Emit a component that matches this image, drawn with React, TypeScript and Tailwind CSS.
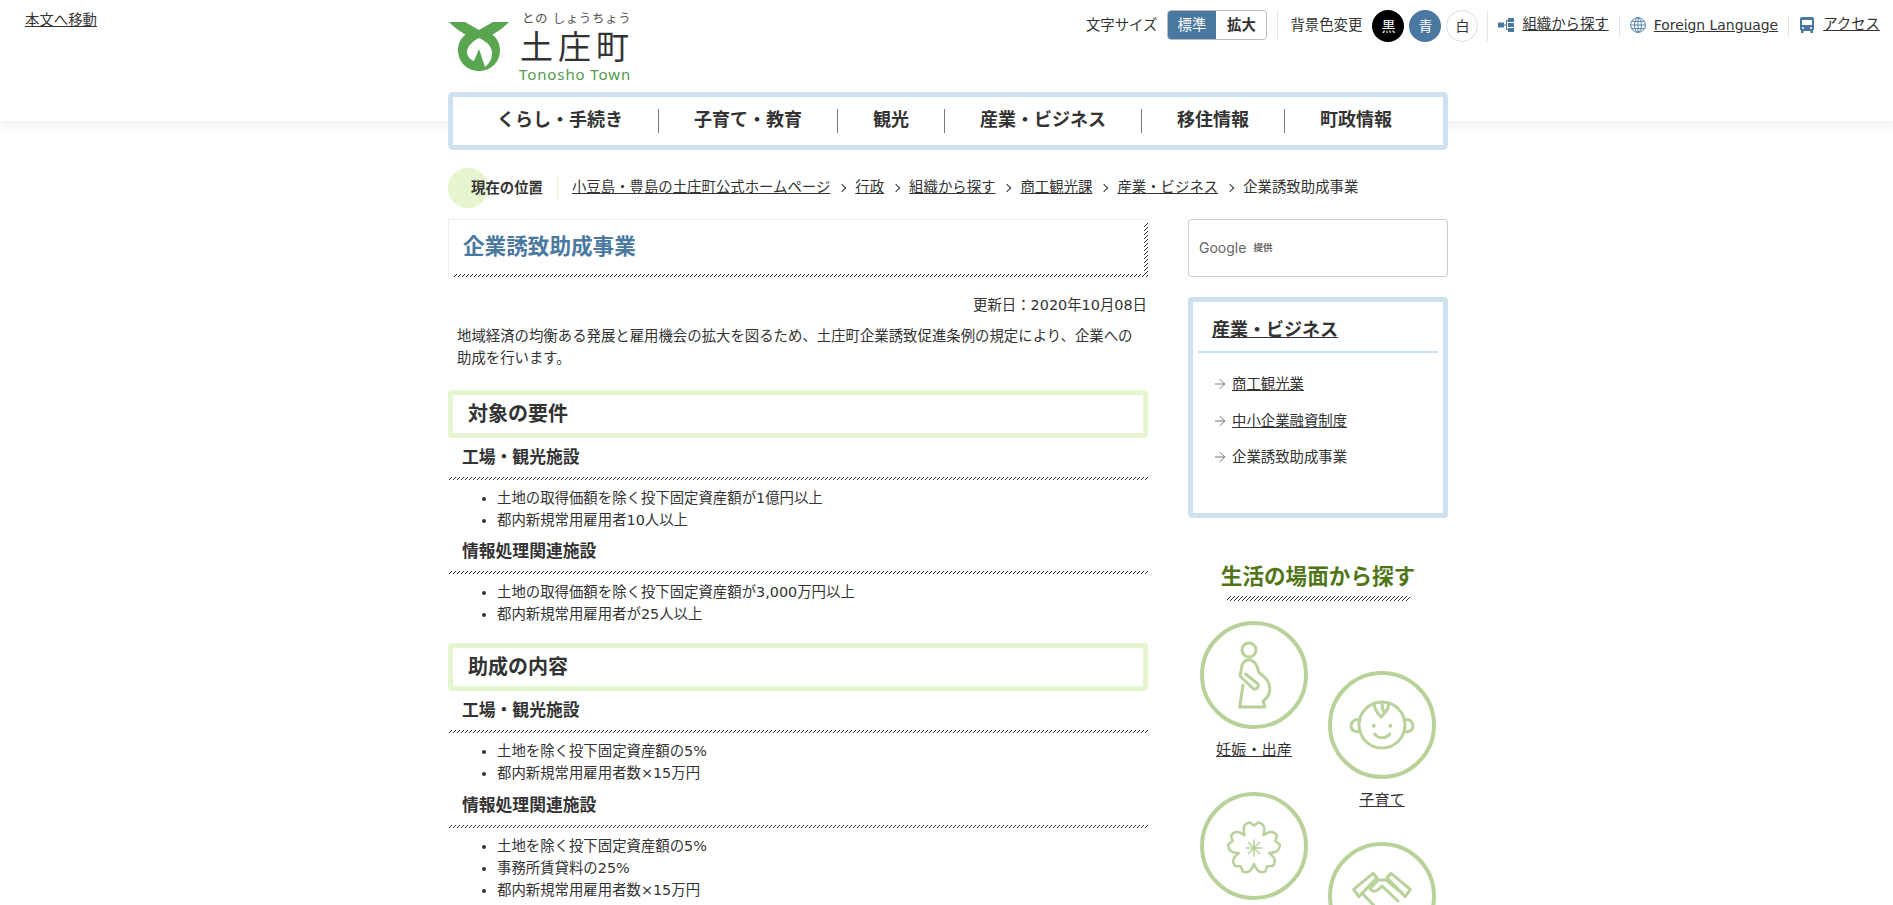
import { ArrowRight } from 'lucide-react';
import type { ReactNode } from 'react';

const font = 'font-["DejaVu_Sans","Noto_Sans_CJK_JP",sans-serif]';
const hatch = 'bg-[linear-gradient(135deg,transparent_38%,#333_38%,#333_62%,transparent_62%)] bg-[length:4px_4px]';

const navItems = ['くらし・手続き', '子育て・教育', '観光', '産業・ビジネス', '移住情報', '町政情報'];
const crumbs = ['小豆島・豊島の土庄町公式ホームページ', '行政', '組織から探す', '商工観光課', '産業・ビジネス'];

// five notched petals round the centre of the circle
function sakuraPath(cx: number, cy: number) {
  const pt = (deg: number, r: number) => {
    const a = (deg * Math.PI) / 180;
    return `${(cx + r * Math.cos(a)).toFixed(1)} ${(cy + r * Math.sin(a)).toFixed(1)}`;
  };
  let d = `M${pt(-126, 16)}`;
  for (let k = 0; k < 5; k++) {
    const a = -90 + 72 * k;
    d += ` Q${pt(a - 28, 27)} ${pt(a - 10, 26)} L${pt(a, 22.5)} L${pt(a + 10, 26)} Q${pt(a + 28, 27)} ${pt(a + 36, 16)}`;
  }
  return d + 'Z';
}

function Logo() {
  return (
    <svg width="60" height="50" viewBox="0 0 60 50" className="shrink-0">
      <path d="M0 0 H16 L30 8 L44 0 H60 C52 8 46 11 41 14 L30 10 L19 14 C14 11 8 8 0 0Z" fill="#5aa650" />
      <path fillRule="evenodd" d="M30 8 C42 8 51 17 51 28 C51 40 42 49 30 49 C18 49 9 40 9 28 C9 17 18 8 30 8Z M30 16 C24 19 18 24 18 30 C18 35 22 38 25 39 L30 27 L36 45 C41 41 43 36 43 31 C43 24 37 19 30 16Z" fill="#5aa650" />
    </svg>
  );
}

function OrgIcon() {
  return (
    <svg width="16" height="14" viewBox="0 0 16 14" fill="#4a78a0" className="shrink-0">
      <rect x="0" y="4.5" width="6" height="5" />
      <rect x="10" y="0" width="6" height="4" />
      <rect x="10" y="5" width="6" height="4" />
      <rect x="10" y="10" width="6" height="4" />
      <path d="M6 6.5 H8 V2 H10 V3 H9 V11 H10 V12 H8 V7.5 H6Z" />
    </svg>
  );
}

function GlobeIcon() {
  return (
    <svg width="16" height="16" viewBox="0 0 16 16" fill="none" stroke="#4a78a0" strokeWidth="0.9" className="shrink-0">
      <circle cx="8" cy="8" r="7.4" />
      <ellipse cx="8" cy="8" rx="3.4" ry="7.4" />
      <path d="M8 .6 V15.4 M.6 8 H15.4 M1.6 4.4 H14.4 M1.6 11.6 H14.4" />
    </svg>
  );
}

function BusIcon() {
  return (
    <svg width="16" height="16" viewBox="0 0 16 16" className="shrink-0">
      <path fillRule="evenodd" fill="#4a78a0" d="M3 0 H13 C14.5 0 15 1 15 2 V13 H14 V16 H11.5 V14 H4.5 V16 H2 V13 H1 V2 C1 1 1.5 0 3 0Z M3 3 V8 H13 V3Z M4 10 A1 1 0 1 0 4 12 A1 1 0 1 0 4 10Z M12 10 A1 1 0 1 0 12 12 A1 1 0 1 0 12 10Z" />
    </svg>
  );
}

function Sep({ h = 'h-[30px]' }: { h?: string }) {
  return <span className={`w-px ${h} bg-[#e5e5e5] shrink-0`} />;
}

function Header() {
  return (
    <header className="h-[121px] bg-white shadow-[0_2px_12px_rgba(0,0,0,0.1)] flex">
      <div className="w-[449px] shrink-0 pt-[10px] pl-[25px] text-[14.4px]">
        <a className="underline">本文へ移動</a>
      </div>
      <div className="flex-1 pt-[11px] flex gap-[10px]">
        <div className="pt-[11px]"><Logo /></div>
        <div className="flex flex-col items-start">
          <span className="text-[12.5px] leading-[15px] tracking-[0.6px] text-[#555] pl-[3px] whitespace-pre">との しょうちょう</span>
          <span className="text-[33px] leading-[39px] tracking-[5px] text-[#333] pl-[1px] font-['Noto_Sans_CJK_JP',sans-serif]">土庄町</span>
          <span className="text-[15px] leading-[18px] tracking-[0.9px] text-[#4f9a4f] font-['Noto_Sans',sans-serif]">Tonosho Town</span>
        </div>
      </div>
      <div className="pt-[10px] pr-[13px] flex items-start text-[14.4px] text-[#333]">
        <span className="leading-[30px] mr-[10px]">文字サイズ</span>
        <div className="flex h-[30px] w-[100px] rounded-[4px] overflow-hidden border border-[#bbb] leading-[28px] text-center mr-[10px]">
          <span className="w-[49px] -my-px -ml-px h-[30px] leading-[30px] bg-[#4a78a0] text-white">標準</span>
          <span className="flex-1 font-bold">拡大</span>
        </div>
        <Sep />
        <span className="leading-[30px] ml-[12px] mr-[10px]">背景色変更</span>
        <div className="flex gap-[5px] mr-[9px] text-[14px] leading-[32px] text-center">
          <span className="w-[32px] h-[32px] rounded-full bg-black text-white">黒</span>
          <span className="w-[32px] h-[32px] rounded-full bg-[#4a78a0] text-white">青</span>
          <span className="w-[32px] h-[32px] rounded-full bg-white border border-[#ddd] leading-[30px]">白</span>
        </div>
        <Sep h="h-[32px]" />
        <a className="flex items-center gap-[8px] h-[30px] mx-[10px]"><OrgIcon /><span className="underline">組織から探す</span></a>
        <Sep h="h-[22px] mt-[5px]" />
        <a className="flex items-center gap-[8px] h-[30px] mx-[10px]"><GlobeIcon /><span className="underline text-[13.9px]">Foreign Language</span></a>
        <Sep h="h-[22px] mt-[5px]" />
        <a className="flex items-center gap-[8px] h-[30px] ml-[10px]"><BusIcon /><span className="underline">アクセス</span></a>
      </div>
    </header>
  );
}

function GlobalNav() {
  return (
    <nav className="relative h-[58px] border-[5px] border-[#cde1ef] rounded-[5px] bg-white pl-[9px] flex items-center">
      {navItems.map((item, i) => (
        <div key={item} className={`px-[35px] h-[24px] leading-[22px] text-[18px] font-bold text-[#333] ${i > 0 ? 'border-l border-[#777]' : ''}`}>
          {item}
        </div>
      ))}
    </nav>
  );
}

function Breadcrumb() {
  return (
    <div className="mt-[18px] h-[40px] flex items-center text-[14.4px] text-[#333] bg-[radial-gradient(circle_at_20px_20px,#e5f5d0_20px,transparent_20.5px)]">
      <span className="pl-[23px] pr-[14px] font-bold border-r border-[#e5f5d0] leading-[24px]">現在の位置</span>
      <div className="flex items-center pl-[14px]">
        {crumbs.map((c) => (
          <span key={c} className="flex items-center">
            <a className="underline">{c}</a>
            <span className="w-[6px] h-[6px] border-t-[1.5px] border-r-[1.5px] border-[#333] rotate-45 ml-[9px] mr-[10px]" />
          </span>
        ))}
        <span>企業誘致助成事業</span>
      </div>
    </div>
  );
}

function H2({ children, className = '' }: { children: string; className?: string }) {
  return (
    <h2 className={`h-[48px] border-[5px] border-[#e5f5d0] rounded-[4px] pl-[15px] leading-[38px] text-[20px] font-bold text-[#333] ${className}`}>
      {children}
    </h2>
  );
}

function H3({ children, className = '' }: { children: string; className?: string }) {
  return (
    <div className={className}>
      <h3 className="pl-[14px] text-[16.8px] leading-[24px] font-bold text-[#333]">{children}</h3>
      <div className={`h-[3px] mt-[8px] ${hatch}`} />
    </div>
  );
}

function Bullets({ items }: { items: string[] }) {
  return (
    <ul className="list-disc pl-[49px] mt-[7px] text-[14.4px] leading-[22px] text-[#333]">
      {items.map((t) => <li key={t}>{t}</li>)}
    </ul>
  );
}

function Main() {
  return (
    <main className="w-[700px] shrink-0">
      <div className="relative h-[58px] border-t border-l border-[#eee] pl-[14px] text-[21.6px] leading-[54px] font-bold text-[#4a78a0]">
        企業誘致助成事業
        <span className={`absolute left-[4px] right-0 bottom-0 h-[3px] ${hatch}`} />
        <span className={`absolute right-0 top-[3px] bottom-0 w-[4px] ${hatch}`} />
      </div>
      <p className="mt-[17px] text-right pr-[1px] text-[14.4px] leading-[22px] text-[#333]">更新日：2020年10月08日</p>
      <p className="mt-[10px] px-[9px] text-[14.4px] leading-[21.6px] text-[#333]">
        地域経済の均衡ある発展と雇用機会の拡大を図るため、土庄町企業誘致促進条例の規定により、企業への助成を行います。
      </p>
      <H2 className="mt-[21px]">対象の要件</H2>
      <H3 className="mt-[7px]">工場・観光施設</H3>
      <Bullets items={['土地の取得価額を除く投下固定資産額が1億円以上', '都内新規常用雇用者10人以上']} />
      <H3 className="mt-[8px]">情報処理関連施設</H3>
      <Bullets items={['土地の取得価額を除く投下固定資産額が3,000万円以上', '都内新規常用雇用者が25人以上']} />
      <H2 className="mt-[18px]">助成の内容</H2>
      <H3 className="mt-[7px]">工場・観光施設</H3>
      <Bullets items={['土地を除く投下固定資産額の5%', '都内新規常用雇用者数×15万円']} />
      <H3 className="mt-[9px]">情報処理関連施設</H3>
      <Bullets items={['土地を除く投下固定資産額の5%', '事務所賃貸料の25%', '都内新規常用雇用者数×15万円']} />
    </main>
  );
}

function CircleIcon({ children }: { children: ReactNode }) {
  return (
    <div className="w-[108px] h-[108px] rounded-full border-[4px] border-[#b9d29a] flex items-center justify-center">
      <svg width="100" height="100" viewBox="0 0 100 100" fill="none" stroke="#b9d29a" strokeWidth="3" strokeLinejoin="round" strokeLinecap="round">
        {children}
      </svg>
    </div>
  );
}

function Scene({ label, children }: { label: string; children: ReactNode }) {
  return (
    <div className="h-[171px] flex flex-col items-center">
      <CircleIcon>{children}</CircleIcon>
      <a className="mt-[10px] text-[15.2px] leading-[22px] underline text-[#333]">{label}</a>
    </div>
  );
}

function Side() {
  return (
    <aside className="w-[260px] shrink-0 text-[#333]">
      <div className="h-[58px] border border-[#ccc] rounded-[3px] flex items-center pl-[10px] gap-[7px] text-[#666]">
        <span className="text-[14px] leading-none font-['Inter',sans-serif]">Google</span>
        <span className="text-[9.5px] leading-none font-bold">提供</span>
      </div>
      <div className="mt-[20px] h-[221px] border-[5px] border-[#cde1ef] rounded-[4px] px-[5px]">
        <div className="h-[51px] border-b-2 border-[#cde1ef] pl-[14px] pt-[16px] text-[18px] leading-[24px] font-bold">
          <a className="underline">産業・ビジネス</a>
        </div>
        <ul className="mt-[13px] text-[14.4px] leading-[22px]">
          <li className="flex items-center h-[36.5px] pl-[14px] gap-[4px]"><ArrowRight size={16} strokeWidth={1.2} color="#555" /><a className="underline">商工観光業</a></li>
          <li className="flex items-center h-[36.5px] pl-[14px] gap-[4px]"><ArrowRight size={16} strokeWidth={1.2} color="#555" /><a className="underline">中小企業融資制度</a></li>
          <li className="flex items-center h-[36.5px] pl-[14px] gap-[4px]"><ArrowRight size={16} strokeWidth={1.2} color="#555" /><span>企業誘致助成事業</span></li>
        </ul>
      </div>
      <h2 className="mt-[43px] text-center text-[21.6px] leading-[32px] font-bold text-[#4f7517]">生活の場面から探す</h2>
      <div className={`mx-auto mt-[3px] w-[183px] h-[5px] ${hatch}`} />
      <div className="mt-[20px] flex gap-[20px] pl-[12px]">
        <div className="flex flex-col">
          <Scene label="妊娠・出産">
            <circle cx="45" cy="25" r="7" />
            <path d="M39 60 L35.7 82 H61 L59 76 C66 72 68 62 63 55 C60 51 57 49 54.5 47 C54 41 50 34.7 45 34.7 C41 34.7 38 38 37.7 42.3 L36 51 L49 63.5 C52 65.5 56 61.5 53.5 58.5 L41.5 49" />
          </Scene>
          <Scene label="">
            <path d={sakuraPath(50, 52)} strokeWidth="2.5" />
            <path d="M50 44 V60 M42 52 H58 M44.5 46.5 L55.5 57.5 M55.5 46.5 L44.5 57.5" strokeWidth="1.6" />
          </Scene>
        </div>
        <div className="flex flex-col mt-[50px]">
          <Scene label="子育て">
            <circle cx="50" cy="50" r="23" />
            <path d="M28 45 C22 43 19 48 19 51 C19 55 23 58 28 56 M72 45 C78 43 81 48 81 51 C81 55 77 58 72 56" />
            <path d="M42 29 C43 36 47 40 49 42 C53 38 57 34 56.5 29 M50 27 C50 32 50 35 53 38" />
            <circle cx="41.7" cy="50.7" r="2" fill="#b9d29a" stroke="none" />
            <circle cx="58.3" cy="50.7" r="2" fill="#b9d29a" stroke="none" />
            <path d="M42.7 59 C46 64 54 64 57.7 59" />
          </Scene>
          <Scene label="">
            <path d="M21.7 43.3 L41 27.3 L45 31.7 L26.7 50.7Z M78.3 43.3 L59 27.3 L55 31.7 L73.3 50.7Z" />
            <path d="M30 47 L50 68 M70 47 L54 34 L46 34 L38 43 C40 46 44 46 47 43 L50 40 L66 55" />
          </Scene>
        </div>
      </div>
    </aside>
  );
}

export default function App() {
  return (
    <div className={`h-screen overflow-hidden bg-white text-[#333] ${font}`}>
      <Header />
      <div className="w-[1000px] ml-[448px] -mt-[29px] relative">
        <GlobalNav />
        <Breadcrumb />
        <div className="mt-[11px] flex justify-between">
          <Main />
          <Side />
        </div>
      </div>
    </div>
  );
}
